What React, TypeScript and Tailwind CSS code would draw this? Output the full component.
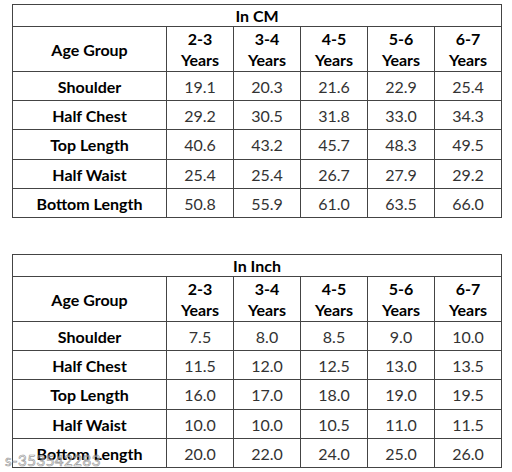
import React from "react";

const ages = ["2-3", "3-4", "4-5", "5-6", "6-7"];

const cmRows: [string, string[]][] = [
  ["Shoulder", ["19.1", "20.3", "21.6", "22.9", "25.4"]],
  ["Half Chest", ["29.2", "30.5", "31.8", "33.0", "34.3"]],
  ["Top Length", ["40.6", "43.2", "45.7", "48.3", "49.5"]],
  ["Half Waist", ["25.4", "25.4", "26.7", "27.9", "29.2"]],
  ["Bottom Length", ["50.8", "55.9", "61.0", "63.5", "66.0"]],
];

const inchRows: [string, string[]][] = [
  ["Shoulder", ["7.5", "8.0", "8.5", "9.0", "10.0"]],
  ["Half Chest", ["11.5", "12.0", "12.5", "13.0", "13.5"]],
  ["Top Length", ["16.0", "17.0", "18.0", "19.0", "19.5"]],
  ["Half Waist", ["10.0", "10.0", "10.5", "11.0", "11.5"]],
  ["Bottom Length", ["20.0", "22.0", "24.0", "25.0", "26.0"]],
];

const rowHeights = ["h-[29px]", "h-[29px]", "h-[30px]", "h-[29px]", "h-[29px]"];

function SizeTable({ title, rows }: { title: string; rows: [string, string[]][] }) {
  return (
    <table className="border-collapse table-fixed w-[489px] text-[16px] leading-[21px]">
      <colgroup>
        <col className="w-[154px]" />
        {ages.map((a) => (
          <col key={a} className="w-[67px]" />
        ))}
      </colgroup>
      <tbody>
        <tr className="h-[22px]">
          <td colSpan={6} className="border border-[#444] text-center font-bold text-black p-0">
            {title}
          </td>
        </tr>
        <tr className="h-[45px]">
          <td className="border border-[#444] text-center font-bold text-black p-0">Age Group</td>
          {ages.map((a) => (
            <td key={a} className="border border-[#444] text-center font-bold text-black p-0">
              <div>{a}</div>
              <div>Years</div>
            </td>
          ))}
        </tr>
        {rows.map(([label, vals], i) => (
          <tr key={label} className={rowHeights[i]}>
            <td className="border border-[#444] text-center font-bold text-black p-0">{label}</td>
            {vals.map((v, j) => (
              <td key={j} className="border border-[#444] text-center text-[#333] p-0">
                {v}
              </td>
            ))}
          </tr>
        ))}
      </tbody>
    </table>
  );
}

export default function App() {
  return (
    <div
      className="relative w-[512px] h-[472px] bg-white overflow-hidden"
      style={{ fontFamily: "Lato, 'Open Sans', sans-serif" }}
    >
      <div className="pt-[4px] pl-[12px] flex flex-col gap-[36px]">
        <SizeTable title="In CM" rows={cmRows} />
        <SizeTable title="In Inch" rows={inchRows} />
      </div>
      <div className="absolute left-[5px] top-[452px] text-[15px] leading-[16px] text-transparent [-webkit-text-stroke:0.7px_#9a9a9a] tracking-[0.5px]">
        s-353542283
      </div>
    </div>
  );
}
